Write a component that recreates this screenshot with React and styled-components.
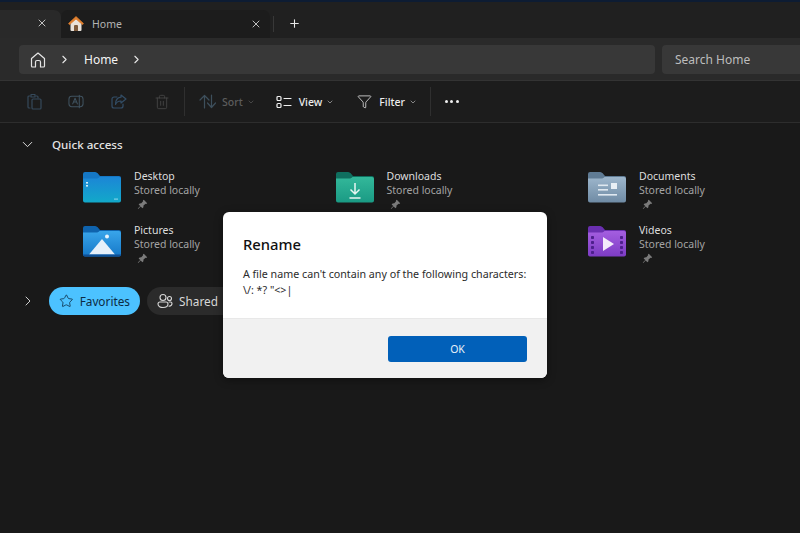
import React from "react";
import styled, { createGlobalStyle } from "styled-components";
import { X, Plus, ChevronRight, ChevronDown, Trash2, Filter, Star } from "lucide-react";

const Global = createGlobalStyle`
  html, body { margin: 0; padding: 0; background: #191919; }
  body { font-family: "Noto Sans", "Open Sans", sans-serif; }
  * { box-sizing: border-box; }
`;
const Page = styled.div`
  position: relative; width: 800px; height: 533px; overflow: hidden;
  background: #191919; display: flex; flex-direction: column;
`;
const TopLine = styled.div`height: 2px; background: #0d1c33; flex: none;`;
const TabStrip = styled.div`
  height: 36px; flex: none; background: #202020; display: flex; align-items: flex-end;
`;
const InactiveTab = styled.div`
  width: 61px; height: 28px; background: #292929; border-top-right-radius: 7px;
  display: flex; align-items: center; justify-content: flex-end; padding: 0 13px 2px 0; color: #e8e8e8;
`;
const ActiveTab = styled.div`
  width: 209px; height: 28px; background: #1c1c1c; border-radius: 7px 7px 0 0;
  display: flex; align-items: center; padding: 0 8px 1px 7px; color: #e8e8e8;
`;
const TabTitle = styled.span`
  flex: 1; margin-left: 8px; font-size: 10.5px; color: #b4b4b4;
`;
const TabDivider = styled.div`width: 1px; height: 16px; background: #383838; margin: 0 0 6px 3px; align-self: flex-end;`;
const NewTab = styled.div`
  display: flex; align-items: center; height: 28px; padding-bottom: 1px; margin-left: 14px; color: #e8e8e8;
`;
const AddressRow = styled.div`
  height: 43px; flex: none; background: #2a2a2a; display: flex; align-items: flex-start;
  padding: 7px 0 0 19px; gap: 7px; border-bottom: 1px solid #333;
`;
const AddressBox = styled.div`
  width: 636px; height: 29px; background: #383838; border-radius: 4px; display: flex; align-items: center;
  padding-left: 11px; color: #e6e6e6;
`;
const Crumb = styled.span`font-size: 12px; font-weight: 400; color: #f4f4f4; margin: 0 12px 0 13px;`;
const CrumbSep = styled.span`display: flex; margin-left: 12px;`;
const SearchBox = styled.div`
  flex: 1; height: 29px; background: #383838; border-radius: 4px 0 0 4px; display: flex; align-items: center;
  padding-left: 13px; font-size: 12px; color: #bdbdbd;
`;
const Toolbar = styled.div`
  height: 42px; flex: none; background: #1c1c1c; border-bottom: 1px solid #2d2d2d; display: flex; align-items: center;
  padding-left: 26px; color: #f0f0f0;
`;
const GhostIcon = styled.span`
  display: flex; width: 16px; justify-content: center; color: ${p => p.$tone}; margin-right: ${p => p.$gap}px;
`;
const ToolDivider = styled.div`width: 1px; height: 29px; background: #2f2f2f; margin-right: ${p => p.$gap}px;`;
const ToolButton = styled.div`
  display: flex; align-items: center; margin-right: ${p => p.$gap}px;
  color: ${p => (p.$off ? "#3d4f5c" : "#f0f0f0")};
`;
const ToolLabel = styled.span`
  font-size: 10.5px; font-weight: 500; margin: 0 4px 0 ${p => p.$lead || 7}px;
  color: ${p => (p.$off ? "#5c5c5c" : "#ececec")};
`;
const ToolCaret = styled.span`display: flex; color: ${p => (p.$off ? "#5c5c5c" : "#bbb")};`;
const More = styled.div`display: flex; gap: 2.5px; margin-left: 14px;`;
const Dot = styled.i`width: 3px; height: 3px; background: #f0f0f0; border-radius: 50%;`;
const Content = styled.main`flex: 1; padding: 13px 0 0 19px;`;
const SectionHead = styled.div`display: flex; align-items: center; gap: 16px; color: #dcdcdc; height: 17px;`;
const SectionTitle = styled.h2`margin: 0; font-size: 11.6px; font-weight: 500; color: #e4e4e4;`;
const Grid = styled.div`
  display: grid; grid-template-columns: repeat(3, 252.5px); grid-auto-rows: 54px; padding: 16px 0 0 64px;
`;
const Item = styled.div`display: flex; gap: 13px;`;
const FolderBox = styled.div`width: 38px; height: 32px; margin-top: 2px; flex: none;`;
const Info = styled.div`display: flex; flex-direction: column;`;
const ItemName = styled.span`font-size: 10.5px; line-height: 14px; color: #dedede;`;
const ItemSub = styled.span`font-size: 10.5px; line-height: 14px; color: #a4a4a4;`;
const PinWrap = styled.span`display: flex; margin: 2px 0 0 3px; color: #7b7b7b;`;
const ChipRow = styled.div`display: flex; align-items: center; margin-top: 10px;`;
const ChipChevron = styled.span`display: flex; color: #dcdcdc; width: 30px; padding-left: 1px;`;
const Chip = styled.div`
  height: 28px; border-radius: 14px; display: flex; align-items: center; gap: 6px; padding: 0 10px;
  margin-right: 7px; font-size: 11.8px;
  background: ${p => (p.$on ? "#4cc2ff" : "#2b2b2b")};
  color: ${p => (p.$on ? "#0c2c44" : "#d8d8d8")};
  width: ${p => p.$w}px; flex: none;
`;
const Dialog = styled.div`
  position: absolute; left: 223px; top: 212px; width: 324px; height: 166px; background: #fff; border-radius: 6px;
  overflow: hidden; display: flex; flex-direction: column; box-shadow: 0 2px 8px rgba(0,0,0,.4);
`;
const DialogBody = styled.div`height: 107px; padding: 22px 20px 0; border-bottom: 1px solid #e8e8e8; flex: none;`;
const DialogTitle = styled.h1`margin: 0 0 12px; font-size: 14.8px; font-weight: 500; color: #111; line-height: 20px;`;
const DialogText = styled.p`margin: 0; font-size: 10.7px; line-height: 16px; color: #2b2b2b; white-space: pre;`;
const DialogFoot = styled.div`flex: 1; background: #f1f1f1; display: flex; justify-content: flex-end; padding: 17px 20px 0;`;
const OkButton = styled.button`
  width: 139px; height: 26px; border: 0; border-radius: 3px; background: #0160b9; color: #e8f0f8;
  font-family: inherit; font-size: 10.5px;
`;

const gradients = {
  blue: ["#1c86d6", "#12a9c9", "#1577c4"],
  green: ["#33b89a", "#1a9a84", "#0f6f5f"],
  slate: ["#9db6cc", "#6f8ba4", "#5f7b94"],
  sky: ["#39a5ea", "#1578c8", "#0f63ad"],
  purple: ["#a45ee0", "#7d3cc4", "#6a2fb0"],
};

const Folder = ({ kind, children, id }) => {
  const [a, b, tab] = gradients[kind];
  return (
    <svg width="38" height="32" viewBox="0 0 38 32">
      <defs>
        <linearGradient id={id} x1="0" y1="0" x2="0" y2="1">
          <stop offset="0" stopColor={a} />
          <stop offset="1" stopColor={b} />
        </linearGradient>
      </defs>
      <path d="M0 3a2 2 0 0 1 2-2h10c1.500 0 2.500 1 3.500 2.200L17 5H36a2 2 0 0 1 2 2v8H0z" fill={tab} />
      <path d="M0 7.500h13c1.500 0 2.500-.5 3.500-1.500h19.500a2 2 0 0 1 2 2v21.500a2 2 0 0 1-2 2H2a2 2 0 0 1-2-2z" fill={`url(#${id})`} />
      {children}
    </svg>
  );
};

const glyphs = {
  desktop: (
    <>
      <rect x="3" y="11" width="2" height="1.600" fill="#cfeefa" />
      <rect x="3" y="14" width="2" height="1.600" fill="#cfeefa" />
      <rect x="31" y="27.500" width="4" height="1.200" fill="#7fd0e8" />
    </>
  ),
  downloads: (
    <path d="M19 12v11M14.500 18.500l4.500 4.500 4.500-4.500M13.500 27h11" stroke="#e8f6f2" strokeWidth="1.500" fill="none" />
  ),
  documents: (
    <>
      <rect x="10" y="13.500" width="10" height="1.600" fill="#dfe8f0" />
      <rect x="10" y="18" width="10" height="1.600" fill="#dfe8f0" />
      <rect x="10" y="23" width="19" height="1.600" fill="#dfe8f0" />
      <rect x="23" y="12" width="6" height="6" fill="#e8eff5" />
    </>
  ),
  pictures: (
    <>
      <circle cx="24" cy="11.500" r="2" fill="#e8f4fc" />
      <path d="M6 29.500 19 14l13 15.500z" fill="#e6f0fa" />
      <path d="M0 29.500h38a2 2 0 0 1-2 2H2a2 2 0 0 1-2-2z" fill="#0e4f96" />
    </>
  ),
  videos: (
    <>
      <path d="M15 12v14l11-7z" fill="#f4ecfb" />
      {[11, 16, 21, 26].map(y => (
        <React.Fragment key={y}>
          <rect x="3" y={y} width="3" height="3" rx=".8" fill="#4d1f8c" />
          <rect x="32" y={y} width="3" height="3" rx=".8" fill="#4d1f8c" />
        </React.Fragment>
      ))}
    </>
  ),
};

const items = [
  { name: "Desktop", kind: "blue", glyph: "desktop" },
  { name: "Downloads", kind: "green", glyph: "downloads" },
  { name: "Documents", kind: "slate", glyph: "documents" },
  { name: "Pictures", kind: "sky", glyph: "pictures" },
  null,
  { name: "Videos", kind: "purple", glyph: "videos" },
];

const icon = { fill: "none", stroke: "currentColor", strokeLinecap: "round", strokeLinejoin: "round" };

const PasteIcon = () => (
  <svg width="15" height="17" viewBox="0 0 15 17" {...icon} strokeWidth="1.200">
    <path d="M3 3H2a1 1 0 0 0-1 1v10a1 1 0 0 0 1 1h1" />
    <path d="M4 1.500h4V4H4z" />
    <rect x="5" y="6" width="9" height="10" rx="1" />
    <path d="M9 3h1a1 1 0 0 1 1 1v1" />
  </svg>
);
const RenameIcon = () => (
  <svg width="17" height="15" viewBox="0 0 17 15" {...icon} strokeWidth="1.100">
    <rect x="1" y="2" width="15" height="11" rx="3" />
    <path d="M5 10l2.500-6L10 10M6 8h3M12 .8v13.400" />
  </svg>
);
const ShareIcon = () => (
  <svg width="16" height="15" viewBox="0 0 16 15" {...icon} strokeWidth="1.200">
    <path d="M6 3H3a2 2 0 0 0-2 2v7a2 2 0 0 0 2 2h7a2 2 0 0 0 2-2v-2" />
    <path d="M10 1l5 4-5 4V7C7 7 5.500 8 4.500 10.500 4.500 6.500 6.500 3.500 10 3.200z" />
  </svg>
);
const SortIcon = () => (
  <svg width="18" height="15" viewBox="0 0 18 15" {...icon} strokeWidth="1.200">
    <path d="M5.500 14V1.500M1 6l4.500-4.500L10 6" />
    <path d="M12.500 1v12.500M8.500 9l4 4.500 4-4.500" />
  </svg>
);
const ViewIcon = () => (
  <svg width="16" height="14" viewBox="0 0 16 14" {...icon} strokeWidth="1.200">
    <rect x="1" y="1.500" width="4" height="4" rx="1" />
    <rect x="1" y="8.500" width="4" height="4" rx="1" />
    <path d="M8 3.500h7M8 10.500h7" />
  </svg>
);
const HomeGlyph = () => (
  <svg width="16" height="16" viewBox="0 0 16 16" {...icon} strokeWidth="1.200">
    <path d="M1.500 6.500 8 1l6.500 5.500v7.500a1 1 0 0 1-1 1H10.500V10a1.500 1.500 0 0 0-1.500-1.500H7A1.500 1.500 0 0 0 5.500 10v5H2.500a1 1 0 0 1-1-1z" />
  </svg>
);
const SharedIcon = () => (
  <svg width="16" height="16" viewBox="0 0 16 16" {...icon} strokeWidth="1.100">
    <circle cx="6" cy="4.500" r="3" />
    <circle cx="12.500" cy="5.500" r="2" />
    <path d="M1 11a2 2 0 0 1 2-2h6a2 2 0 0 1 2 2c0 2.500-2.500 3.500-5 3.500S1 13.500 1 11z" />
    <path d="M12 9h1.500A1.500 1.500 0 0 1 15 10.500c0 1.500-1 2.500-3 2.700" />
  </svg>
);
const PinIcon = () => (
  <svg width="11" height="11" viewBox="0 0 11 11">
    <path d="M6.800.8l3.400 3.400-1 .8-.6-.2L6.500 6.600l-.1 1.700-1 1L3.700 7.500 1.200 10l-.4-.4L3.300 7.100 1.600 5.400l1-1 1.700-.1 1.800-2.100-.2-.6z" fill="currentColor" />
  </svg>
);
const HouseLogo = () => (
  <svg width="16" height="15" viewBox="0 0 16 15">
    <path d="M2.500 7 8 2l5.500 5v7a1 1 0 0 1-1 1h-9a1 1 0 0 1-1-1z" fill="#e9e2da" />
    <path d="M6 15V10a1 1 0 0 1 1-1h2a1 1 0 0 1 1 1v5z" fill="#7d5a3c" />
    <path d="M.5 7.600 8 .6l7.500 7-1 1L8 3 1.500 8.600z" fill="#e07f2e" stroke="#e07f2e" strokeWidth=".8" />
  </svg>
);

export default function App() {
  return (
    <Page>
      <Global />
      <TopLine />
      <TabStrip>
        <InactiveTab><X size={12} strokeWidth={1.6} /></InactiveTab>
        <ActiveTab>
          <HouseLogo />
          <TabTitle>Home</TabTitle>
          <X size={12} strokeWidth={1.6} />
        </ActiveTab>
        <TabDivider />
        <NewTab><Plus size={13} strokeWidth={2} /></NewTab>
      </TabStrip>
      <AddressRow>
        <AddressBox>
          <HomeGlyph />
          <CrumbSep><ChevronRight size={13} strokeWidth={2} /></CrumbSep>
          <Crumb>Home</Crumb>
          <ChevronRight size={13} strokeWidth={2} />
        </AddressBox>
        <SearchBox>Search Home</SearchBox>
      </AddressRow>
      <Toolbar>
        <GhostIcon $tone="#35495a" $gap={26}><PasteIcon /></GhostIcon>
        <GhostIcon $tone="#3f525f" $gap={27}><RenameIcon /></GhostIcon>
        <GhostIcon $tone="#324d66" $gap={27}><ShareIcon /></GhostIcon>
        <GhostIcon $tone="#4a4a4a" $gap={14}><Trash2 size={16} strokeWidth={1.2} /></GhostIcon>
        <ToolDivider $gap={14} />
        <ToolButton $off $gap={21}>
          <SortIcon />
          <ToolLabel $off $lead={5}>Sort</ToolLabel>
          <ToolCaret $off><ChevronDown size={8} /></ToolCaret>
        </ToolButton>
        <ToolButton $gap={23}>
          <ViewIcon />
          <ToolLabel>View</ToolLabel>
          <ToolCaret><ChevronDown size={8} /></ToolCaret>
        </ToolButton>
        <ToolButton $gap={13}>
          <Filter size={15} strokeWidth={1.2} />
          <ToolLabel $lead={7}>Filter</ToolLabel>
          <ToolCaret><ChevronDown size={8} /></ToolCaret>
        </ToolButton>
        <ToolDivider $gap={0} />
        <More><Dot /><Dot /><Dot /></More>
      </Toolbar>
      <Content>
        <SectionHead>
          <ChevronDown size={17} strokeWidth={1.4} />
          <SectionTitle>Quick access</SectionTitle>
        </SectionHead>
        <Grid>
          {items.map((it, i) =>
            it ? (
              <Item key={it.name}>
                <FolderBox>
                  <Folder kind={it.kind} id={`f${i}`}>{glyphs[it.glyph]}</Folder>
                </FolderBox>
                <Info>
                  <ItemName>{it.name}</ItemName>
                  <ItemSub>Stored locally</ItemSub>
                  <PinWrap><PinIcon /></PinWrap>
                </Info>
              </Item>
            ) : (
              <div key={i} />
            )
          )}
        </Grid>
        <ChipRow>
          <ChipChevron><ChevronRight size={16} strokeWidth={1.4} /></ChipChevron>
          <Chip $on $w={91}><Star size={16} strokeWidth={1.3} />Favorites</Chip>
          <Chip $w={90}><SharedIcon />Shared</Chip>
        </ChipRow>
      </Content>
      <Dialog>
        <DialogBody>
          <DialogTitle>Rename</DialogTitle>
          <DialogText>{"A file name can't contain any of the following characters:\n\\/: *? \"<>|"}</DialogText>
        </DialogBody>
        <DialogFoot><OkButton>OK</OkButton></DialogFoot>
      </Dialog>
    </Page>
  );
}
